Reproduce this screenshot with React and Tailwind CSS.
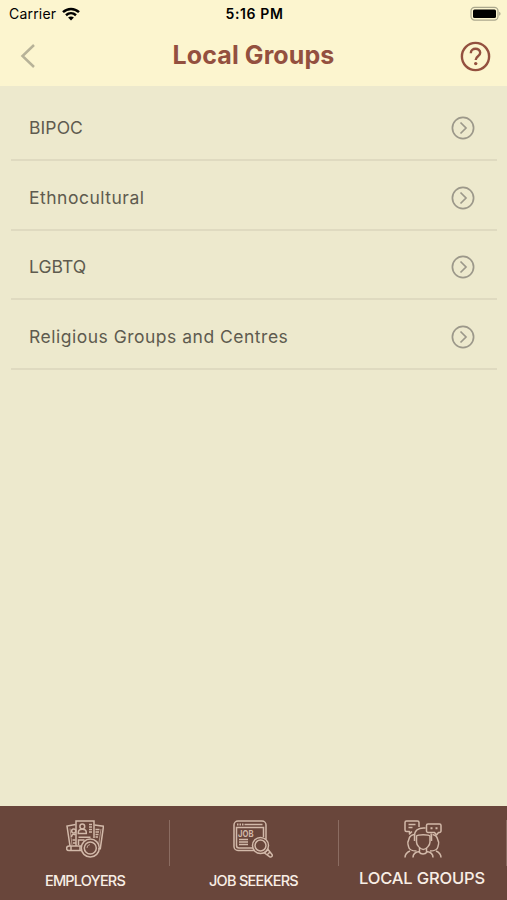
const groups = [
  { name: "BIPOC", spacing: "tracking-[0.1px]" },
  { name: "Ethnocultural", spacing: "tracking-[0.5px]" },
  { name: "LGBTQ", spacing: "tracking-[0px]" },
  { name: "Religious Groups and Centres", spacing: "tracking-[0.5px]" },
];

function StatusBar() {
  return (
    <div className="grid h-7 grid-cols-3 items-center pl-[9px] pr-[6px] text-black">
      <div className="flex items-center gap-[6px]">
        <span className="text-[14px] leading-none tracking-[0.2px]">Carrier</span>
        <svg width="18" height="14" viewBox="0 0 18 14" fill="none" stroke="currentColor" strokeWidth="2.5">
          <path d="M1 5.1C5.6.8 12.4.8 17 5.1" />
          <path d="M4 8.2c2.9-2.6 7.1-2.6 10 0" />
          <path d="M9 13.5 6.1 10.6c1.7-1.5 4.1-1.5 5.8 0Z" fill="currentColor" stroke="none" />
        </svg>
      </div>
      <span className="-ml-px text-center text-[14px] font-semibold leading-none tracking-[0.6px] whitespace-nowrap">5:16 PM</span>
      <svg className="justify-self-end" width="31" height="16" viewBox="0 0 31 16">
        <rect x="1" y="1.3" width="27" height="12.8" rx="3.6" fill="none" stroke="#aaa78d" strokeWidth="1.2" />
        <rect x="3" y="3.4" width="23" height="8.7" rx="1.5" fill="#000" />
        <path d="M29.2 5.7c1.8.8 1.8 3.2 0 4Z" fill="#aaa78d" />
      </svg>
    </div>
  );
}

function EmployersIcon() {
  return (
    <svg className="ml-px" width="38" height="38" viewBox="0 0 38 38" fill="none" stroke="#d2b9a9" strokeWidth="1.5">
      <path d="M9.5 4.5 1 6l3 20M28.5 5l9 1.2-3.2 22.5h-2" />
      <path d="M4 8.5 6 25M35 9l-2.5 17" strokeWidth=".7" />
      <path d="M29.5 9.5h4M29.5 12h3.5M29.5 14.5h3M29.5 17h2.5" />
      <circle cx="7.7" cy="11" r="2" />
      <path d="M5.5 17c0-3 3-3.5 4-2M6.5 20h3M7 23h3" />
      <path d="M10 26V1h18v17" />
      <circle cx="16.3" cy="6.5" r="2.4" />
      <path d="M12.3 13.5v-1c0-4.3 8-4.3 8 0v1ZM23 4.5h3M23 7h3M23 9.5h3M23 12h3M12.5 17.3h12M12.5 25v-5h6" />
      <path d="M16 26H3c-3.2 0-3.2 4.5 0 4.5h13M5 26v4.5M14 26v4.5" />
      <circle cx="24.3" cy="28" r="9" />
      <circle cx="24.3" cy="28" r="6" />
      <path d="M21 28a3.5 3.5 0 0 1 3-3.5" strokeWidth=".8" />
    </svg>
  );
}

function JobSeekersIcon() {
  return (
    <svg className="-ml-[2px]" width="40" height="38" viewBox="0 0 40 38" fill="none" stroke="#d2b9a9" strokeWidth="1.5">
      <path d="M21 30.5H5A4 4 0 0 1 1 26.5V5a4 4 0 0 1 4-4h24a4 4 0 0 1 4 4v14" />
      <path d="M20 28H6a2.5 2.5 0 0 1-2.5-2.5V7.5h27V17M11.5 4.5h18" />
      <path d="M4 4.5h1.5M6.5 4.5H8M9 4.5h1.5" strokeWidth="2" />
      <text x="5" y="16.8" fill="#d2b9a9" stroke="none" fontSize="9" fontWeight="700" textLength="15.5" lengthAdjust="spacingAndGlyphs" fontFamily="Inter, sans-serif">
        JOB
      </text>
      <path d="M6 19.5h9M6 22h9M6 24.5h9" />
      <circle cx="27.5" cy="25.5" r="8" />
      <circle cx="27.5" cy="25.5" r="5.5" />
      <path d="m31.5 33 3.5-3.5 3.8 4.8c1.3 1.7-.6 3.6-2.3 2.3ZM34 35l2.7-2.7" />
    </svg>
  );
}

function LocalGroupsIcon() {
  return (
    <svg className="ml-px" width="38" height="38" viewBox="0 0 38 38" fill="none" stroke="#d2b9a9" strokeWidth="1.5" strokeLinejoin="round">
      <path d="M8 11.5 5.5 14v-2.5h-3A1.5 1.5 0 0 1 1 10V2.5A1.5 1.5 0 0 1 2.5 1h11A1.5 1.5 0 0 1 15 2.5V7M4.5 4.5h7M4.5 7.5h4" />
      <path d="M24 4h11.5A1.5 1.5 0 0 1 37 5.500V11a1.5 1.5 0 0 1-1.5 1.5h-1L32.5 15l-2-2.5H24a1.5 1.5 0 0 1-1.5-1.5V5.5A1.5 1.5 0 0 1 24 4Z" />
      <path d="M26.5 8.3h2M31.5 8.300h2" strokeWidth="1.9" />
      <path d="M10.5 21v-5c0-5.500 4-8 9-8h2M27 13.500c.8 2.500.5 5 .5 7.500" />
      <path d="M12.500 16c1.500-1.800 12-1.800 13.500 0v6c0 3-3.700 7.500-6.700 7.500s-6.800-4.500-6.800-7.500Z" />
      <path d="M10 14.500c-5.500 1-4.500 4-5.500 6-2 3 0 4 0 6 .5 3 3.500 4.500 8 4.500M28.500 14.500c5.500 1 4.500 4 5.500 6 2 3 0 4 0 6-.5 3-3.500 4.500-8 4.500" />
      <path d="M1 37.500c0-3.500 1.500-5 5-6.500M37 37.500c0-3.500-1.500-5-5-6.500M9 37.500c0-3.500 2-5.500 6.500-6v-3.500M29 37.500c0-3.500-2-5.500-6.500-6v-3.500M15 32c2 2.800 6 2.800 8 0" />
    </svg>
  );
}

export default function App() {
  return (
    <div className="flex h-[900px] w-[507px] flex-col overflow-hidden bg-[#ede9cd] font-['Inter',sans-serif]">
      <header className="h-[86px] bg-[#fcf5cf]">
        <StatusBar />
        <div className="grid h-14 grid-cols-[80px_1fr_80px] items-center">
          <svg className="ml-5" width="16" height="26" viewBox="0 0 16 26" fill="none" stroke="#b7b298" strokeWidth="2.5">
            <path d="M14 2 2.5 13 14 24" />
          </svg>
          <h1 className="text-center text-[25px] font-bold tracking-[0.1px] text-[#93503f] whitespace-nowrap">Local Groups</h1>
          <svg className="mr-4 justify-self-end" width="31" height="31" viewBox="0 0 31 31" fill="none" stroke="#93503f" strokeWidth="2.4">
            <circle cx="15.5" cy="15.5" r="13.6" />
            <path d="M10.8 12.2c0-6 9.400-5.800 9.400-.4 0 3.700-4.500 3.300-4.500 7.200" />
            <circle cx="15.7" cy="22.6" r="1.7" fill="#93503f" stroke="none" />
          </svg>
        </div>
      </header>

      <main className="flex-1 pt-[5px] pr-[10px] pl-[11px]">
        {groups.map((group) => (
          <div key={group.name} className="flex h-[69.8px] items-center justify-between border-b-2 border-[#dfdac0] pr-[22px] pl-[18px] pt-[6px]">
            <span className={`text-[17.5px] leading-6 text-[#5e5b4f] ${group.spacing}`}>{group.name}</span>
            <svg width="24" height="24" viewBox="0 0 24 24" fill="none" stroke="#9c988a" strokeWidth="1.7">
              <circle cx="12" cy="12" r="10.6" />
              <path d="m9.5 6.5 5.5 5.5-5.5 5.5" />
            </svg>
          </div>
        ))}
      </main>

      <nav className="grid h-[94px] grid-cols-[170px_169px_168px] bg-[#69463b] pt-[14px] text-[#f8eee5]">
        <div className="flex flex-col items-center">
          <div className="flex h-[46px] w-full justify-center border-r border-[#8b6c61]">
            <EmployersIcon />
          </div>
          <span className="mt-[5px] text-[14.5px] font-medium leading-5 tracking-[-0.8px]">EMPLOYERS</span>
        </div>
        <div className="flex flex-col items-center">
          <div className="flex h-[46px] w-full justify-center border-r border-[#8b6c61]">
            <JobSeekersIcon />
          </div>
          <span className="mt-[5px] mr-[2px] text-[14.5px] font-medium leading-5 tracking-[-0.75px]">JOB SEEKERS</span>
        </div>
        <div className="flex flex-col items-center">
          <div className="flex h-[46px] w-full justify-center border-r border-[#8b6c61]">
            <LocalGroupsIcon />
          </div>
          <span className="mr-[2px] text-[16.5px] font-medium leading-6 tracking-[-0.15px]">LOCAL GROUPS</span>
        </div>
      </nav>
    </div>
  );
}
